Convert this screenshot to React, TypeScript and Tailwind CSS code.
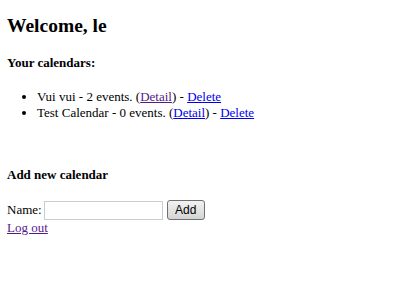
export default function App() {
  return (
    <div
      className="w-[419px] h-[304px] bg-white text-black px-[7px] text-[13px]"
      style={{ fontFamily: '"Liberation Serif", "Times New Roman", serif' }}
    >
      <h2 className="pt-[15px] text-[19.5px] leading-[22px] font-bold">Welcome, le</h2>
      <h4 className="mt-[18px] text-[13px] leading-[15px] font-bold">Your calendars:</h4>
      <ul className="mt-[19px] pl-[30px] list-disc leading-[16px]">
        <li>
          Vui vui - 2 events. (<a className="text-[#551a8b] underline" href="#">Detail</a>) -{' '}
          <a className="text-[#0000ee] underline" href="#">Delete</a>
        </li>
        <li>
          Test Calendar - 0 events. (<a className="text-[#0000ee] underline" href="#">Detail</a>) -{' '}
          <a className="text-[#0000ee] underline" href="#">Delete</a>
        </li>
      </ul>
      <h4 className="mt-[46px] text-[13px] leading-[15px] font-bold">Add new calendar</h4>
      <div className="mt-[18px] flex items-center h-[20px]">
        <span className="leading-[16px]">Name:</span>
        <input
          type="text"
          className="ml-[2px] w-[119px] h-[19px] border border-[#c8ccd4] bg-white outline-none"
        />
        <button
          className="ml-[4px] w-[38px] h-[20px] rounded-[3px] border border-[#707070] bg-gradient-to-b from-[#f2f2f2] to-[#d4d4d4] text-[12px] leading-[16px]"
          style={{ fontFamily: '"Liberation Sans", Arial, sans-serif' }}
        >
          Add
        </button>
      </div>
      <div className="leading-[16px]">
        <a className="text-[#551a8b] underline" href="#">Log out</a>
      </div>
    </div>
  );
}
